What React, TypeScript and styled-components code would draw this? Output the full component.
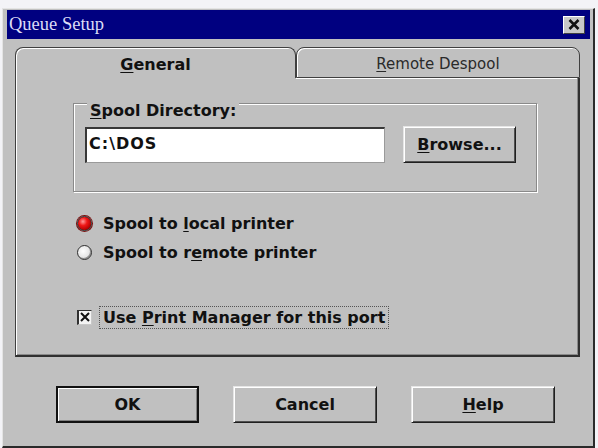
import styled, { createGlobalStyle } from "styled-components";

const GlobalStyle = createGlobalStyle`
    html, body {
        margin: 0;
        padding: 0;
    }
    body {
        background: #f3f3f7;
        font-family: "DejaVu Sans", "Liberation Sans", sans-serif;
    }
`

const Screen = styled.div`
    width: 598px;
    height: 448px;
    padding: 8px 0 0 2px;
    box-sizing: border-box;
`

const Window = styled.div`
    width: 593px;
    height: 440px;
    box-sizing: border-box;
    background: #c0c0c0;
    border-left: 1px solid #e4e4e4;
    border-top: 1px solid #e4e4e4;
    border-right: 2px solid #2a2a2a;
    border-bottom: 2px solid #2a2a2a;
    padding: 1px 3px 0 4px;
    display: flex;
    flex-direction: column;
`

const TitleBar = styled.div`
    height: 29px;
    background: #000080;
    display: flex;
    align-items: center;
    justify-content: space-between;
    padding: 0 5px 0 2px;
`

const Title = styled.span`
    font-family: "Liberation Serif", serif;
    font-size: 18.5px;
    color: #dcdcf6;
`

const CloseButton = styled.button`
    width: 22px;
    height: 18px;
    padding: 0;
    background: #c8c8c8;
    border: 1px solid;
    border-color: #ffffff #404040 #404040 #ffffff;
    display: flex;
    align-items: center;
    justify-content: center;
`

const Body = styled.div`
    padding: 8px 10px 0 8px;
    display: flex;
    flex-direction: column;
`

const TabRow = styled.div`
    display: flex;
    height: 31px;
`

const Tab = styled.div<{ $active?: boolean; $width: number }>`
    width: ${p => p.$width}px;
    box-sizing: border-box;
    border: 1px solid #404040;
    border-bottom: ${p => (p.$active ? "none" : "1px solid #404040")};
    border-radius: 8px 8px 0 0;
    box-shadow: inset 1px 1px 0 #ffffff;
    display: flex;
    align-items: center;
    justify-content: center;
    font-size: ${p => (p.$active ? 16 : 15)}px;
    font-weight: ${p => (p.$active ? "bold" : "normal")};
    color: ${p => (p.$active ? "#111" : "#2a2a2a")};
    padding-top: 2px;
`

const Panel = styled.div`
    height: 279px;
    box-sizing: border-box;
    border-left: 1px solid #404040;
    border-right: 2px solid #303030;
    border-bottom: 2px solid #303030;
    box-shadow: inset 1px 0 0 #ffffff, inset -1px -1px 0 #8a8a8a;
    background: linear-gradient(to right, transparent 280px, #ffffff 280px) top / 100% 1px no-repeat;
    padding: 25px 0 0 57px;
    display: flex;
    flex-direction: column;
`

const GroupBox = styled.div`
    position: relative;
    width: 464px;
    height: 89px;
    box-sizing: border-box;
    border: 1px solid #8a8a8a;
    box-shadow: inset 1px 1px 0 #ffffff, 1px 1px 0 #ffffff;
    padding: 22px 0 0 11px;
    display: flex;
    align-items: center;
    align-self: flex-start;
    align-items: flex-start;
    gap: 18px;
`

const GroupLabel = styled.span`
    position: absolute;
    top: -3px;
    left: 13px;
    padding: 0 3px;
    background: #c0c0c0;
    font-size: 16px;
    font-weight: bold;
    color: #111;
    line-height: 19px;
`

const TextInput = styled.div`
    width: 300px;
    height: 36px;
    margin-top: 1px;
    box-sizing: border-box;
    background: #ffffff;
    border-top: 2px solid #383838;
    border-left: 2px solid #383838;
    border-right: 1px solid #9a9a9a;
    border-bottom: 1px solid #9a9a9a;
    padding: 5px 0 0 2px;
    font-size: 16px;
    font-weight: bold;
    letter-spacing: 1px;
    color: #111;
`

const Button = styled.button<{ $default?: boolean; $width: number }>`
    width: ${p => p.$width}px;
    height: 37px;
    box-sizing: border-box;
    background: #c0c0c0;
    font-family: "DejaVu Sans", sans-serif;
    font-size: 16px;
    font-weight: bold;
    color: #111;
    padding: 0;
    ${p =>
        p.$default
            ? `border: 2px solid #111;
               box-shadow: inset 1px 1px 0 #ffffff, inset -1px -1px 0 #808080;`
            : `border: 1px solid;
               border-color: #e6e6e6 #202020 #202020 #e6e6e6;
               box-shadow: inset 1px 1px 0 #ffffff, inset -1px -1px 0 #505050;`}
`

const OptionList = styled.div`
    margin: 19px 0 0 4px;
    display: flex;
    flex-direction: column;
    gap: 5px;
`

const OptionRow = styled.div<{ $gap?: number }>`
    height: 24px;
    display: flex;
    align-items: center;
    gap: ${p => p.$gap ?? 11}px;
    font-size: 16px;
    font-weight: bold;
    color: #111;
`

const Radio = styled.span<{ $checked?: boolean }>`
    width: 15px;
    height: 15px;
    box-sizing: border-box;
    border-radius: 50%;
    border: 1px solid #303030;
    background: ${p =>
        p.$checked
            ? "radial-gradient(circle at 38% 35%, #ff9a9a 0, #f01818 35%, #b00000 75%)"
            : "radial-gradient(circle at 40% 40%, #ffffff 0, #e4e4e4 60%, #b0b0b0 100%)"};
    box-shadow: ${p => (p.$checked ? "0 0 0 1px #7a1010" : "inset -1px -1px 0 #909090")};
`

const CheckRow = styled(OptionRow)`
    margin: 41px 0 0 4px;
`

const CheckBox = styled.span`
    width: 15px;
    height: 15px;
    box-sizing: border-box;
    background: #f4f4f4;
    border-left: 2px solid #303030;
    border-top: 1px solid #303030;
    border-right: 1px solid #c8c8c8;
    border-bottom: 1px solid #c8c8c8;
    display: flex;
    align-items: center;
    justify-content: center;
`

const FocusLabel = styled.span`
    border: 1px dotted #555;
    padding: 1px 3px;
`

const ButtonRow = styled.div`
    margin-top: 29px;
    padding-left: 41px;
    display: flex;
    gap: 34px;
`

const Key = styled.u`
    text-decoration: underline;
    text-underline-offset: 2px;
`

function App() {
    return (
        <Screen>
            <GlobalStyle />
            <Window>
                <TitleBar>
                    <Title>Queue Setup</Title>
                    <CloseButton>
                        <svg width="12" height="11" viewBox="0 0 12 11">
                            <path d="M1.5 1 L10.5 10 M10.5 1 L1.5 10" stroke="#111" strokeWidth="2.6" />
                        </svg>
                    </CloseButton>
                </TitleBar>
                <Body>
                    <TabRow>
                        <Tab $active $width={281}>
                            <span><Key>G</Key>eneral</span>
                        </Tab>
                        <Tab $width={284}>
                            <span><Key>R</Key>emote Despool</span>
                        </Tab>
                    </TabRow>
                    <Panel>
                        <GroupBox>
                            <GroupLabel><Key>S</Key>pool Directory:</GroupLabel>
                            <TextInput>C:\DOS</TextInput>
                            <Button $width={113}>
                                <Key>B</Key>rowse...
                            </Button>
                        </GroupBox>
                        <OptionList>
                            <OptionRow>
                                <Radio $checked />
                                <span>Spool to <Key>l</Key>ocal printer</span>
                            </OptionRow>
                            <OptionRow>
                                <Radio />
                                <span>Spool to r<Key>e</Key>mote printer</span>
                            </OptionRow>
                        </OptionList>
                        <CheckRow $gap={7}>
                            <CheckBox>
                                <svg width="10" height="10" viewBox="0 0 10 10">
                                    <path d="M1 1 L9 9 M9 1 L1 9" stroke="#111" strokeWidth="2" />
                                </svg>
                            </CheckBox>
                            <FocusLabel>Use <Key>P</Key>rint Manager for this port</FocusLabel>
                        </CheckRow>
                    </Panel>
                    <ButtonRow>
                        <Button $default $width={143}>OK</Button>
                        <Button $width={144}>Cancel</Button>
                        <Button $width={144}><Key>H</Key>elp</Button>
                    </ButtonRow>
                </Body>
            </Window>
        </Screen>
    )
}

export default App
